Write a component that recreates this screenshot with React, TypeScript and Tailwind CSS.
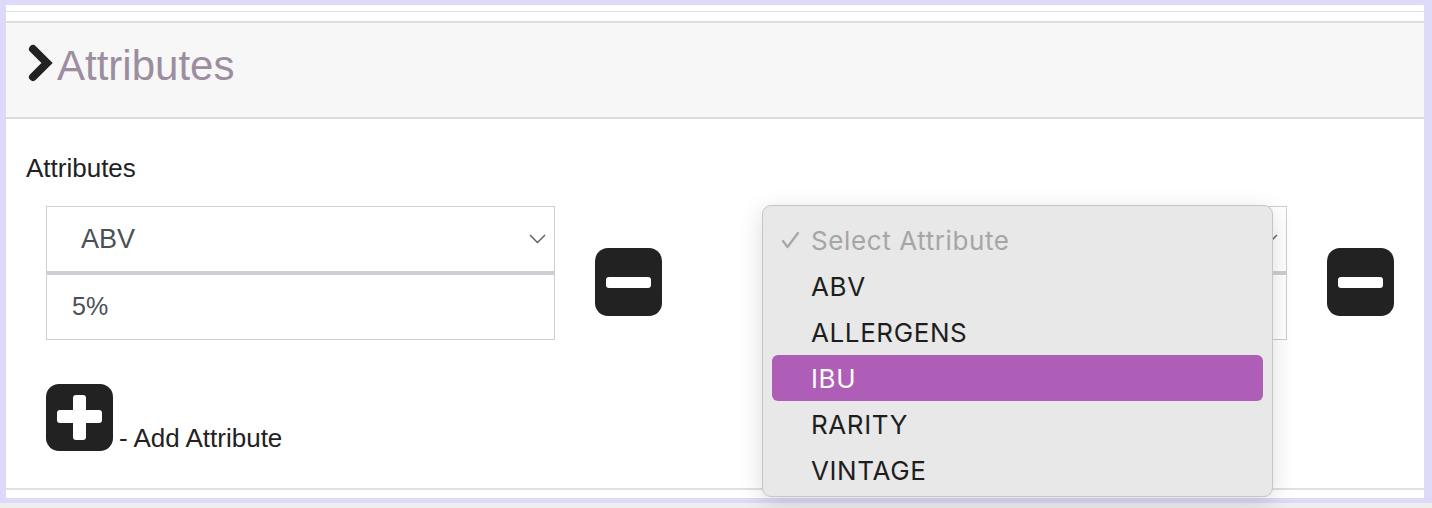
import React from 'react';

const options = ['ABV', 'ALLERGENS', 'IBU', 'RARITY', 'VINTAGE'];

const SelectChevron: React.FC = () => (
  <svg width="17" height="10" viewBox="0 0 17 10" fill="none">
    <polyline points="1,1 8.5,8.5 16,1" stroke="#555b61" strokeWidth="1.4" />
  </svg>
);

const MinusButton: React.FC = () => (
  <button type="button" className="mt-[42px] flex h-[68px] w-[67px] shrink-0 items-center justify-center rounded-[13px] bg-[#222222]">
    <span className="block h-[11px] w-[45px] rounded-[3px] bg-white" />
  </button>
);

const AttributeRow: React.FC<{ value: string; amount: string }> = ({ value, amount }) => (
  <div className="flex w-[732px] shrink-0 items-start gap-[40px]">
    <div className="w-[509px] shrink-0">
      <div className="flex h-[67px] items-center justify-between border border-b-2 border-[#ccd0d4] bg-white pl-[34px] pr-[8px] text-[27px] text-[#495057]">
        <span>{value}</span>
        <SelectChevron />
      </div>
      <div className="flex h-[67px] items-center border border-t-2 border-[#ccd0d4] bg-white pl-[25px] text-[25px] text-[#495057]">
        {amount}
      </div>
    </div>
    <MinusButton />
  </div>
);

export default function App() {
  return (
    <div className="h-[508px] w-[1432px] overflow-hidden bg-[#eeeeee] font-['Liberation_Sans',Arial,sans-serif]">
      <div className="relative flex h-[503px] flex-col border-b-[5px] border-l-[6px] border-r-[8px] border-t-[5px] border-[#dcdaf8] bg-white">
        <div className="mt-[6px] h-px bg-[#e2e2e2]" />
        <div className="mt-[9px] h-[2px] bg-[#dedede]" />
        <div className="flex h-[96px] items-center border-b-2 border-[#dddddd] bg-[#f7f7f7] pl-[22px]">
          <svg width="26" height="38" viewBox="0 0 26 38" className="-mt-[14px]">
            <polyline points="5,5 19,19 5,33" fill="none" stroke="#222222" strokeWidth="8" strokeLinecap="round" />
          </svg>
          <h2 className="-mt-[8px] ml-[3px] text-[42px] leading-none text-[#9c8ea0]">Attributes</h2>
        </div>

        <div className="flex-1 overflow-hidden pl-[20px] pt-[35px]">
          <label className="block text-[26px] leading-[28px] text-[#222222]">Attributes</label>
          <div className="mt-[24px] flex pl-[20px]">
            <AttributeRow value="ABV" amount="5%" />
            <AttributeRow value="" amount="" />
          </div>
          <div className="mt-[44px] flex items-end pl-[20px]">
            <button type="button" className="relative h-[67px] w-[67px] shrink-0 rounded-[13px] bg-[#222222]">
              <span className="absolute left-[11px] top-[26px] h-[13px] w-[45px] rounded-[3px] bg-white" />
              <span className="absolute left-[27px] top-[11px] h-[45px] w-[13px] rounded-[3px] bg-white" />
            </button>
            <span className="mb-[-1px] ml-[6px] text-[26px] leading-[28px] text-[#222222]">- Add Attribute</span>
          </div>
        </div>
        <div className="mb-[8px] h-[2px] bg-[#e0e0e0]" />

        <div className="absolute left-[756px] top-[200px] h-[292px] w-[511px] rounded-[9px] border border-[#c6c6c6] bg-[#e8e8e8] px-[9px] pt-[11px] font-['Inter',sans-serif] text-[26px] tracking-[0.6px] shadow-[0_6px_24px_rgba(0,0,0,0.14)]">
          <div className="flex h-[46px] items-center text-[#a6a6a6]">
            <svg width="39" height="18" viewBox="0 0 39 18" className="shrink-0">
              <polyline points="11,10 15.5,16 26,2" fill="none" stroke="#a6a6a6" strokeWidth="2.2" strokeLinecap="round" strokeLinejoin="round" />
            </svg>
            <span>Select Attribute</span>
          </div>
          {options.map((o) => (
            <div
              key={o}
              className={
                o === 'IBU'
                  ? 'flex h-[46px] items-center rounded-[6px] bg-[#af5eb8] pl-[39px] text-white'
                  : 'flex h-[46px] items-center pl-[39px] text-[#1e1e1e]'
              }
            >
              {o}
            </div>
          ))}
        </div>
      </div>
    </div>
  );
}
